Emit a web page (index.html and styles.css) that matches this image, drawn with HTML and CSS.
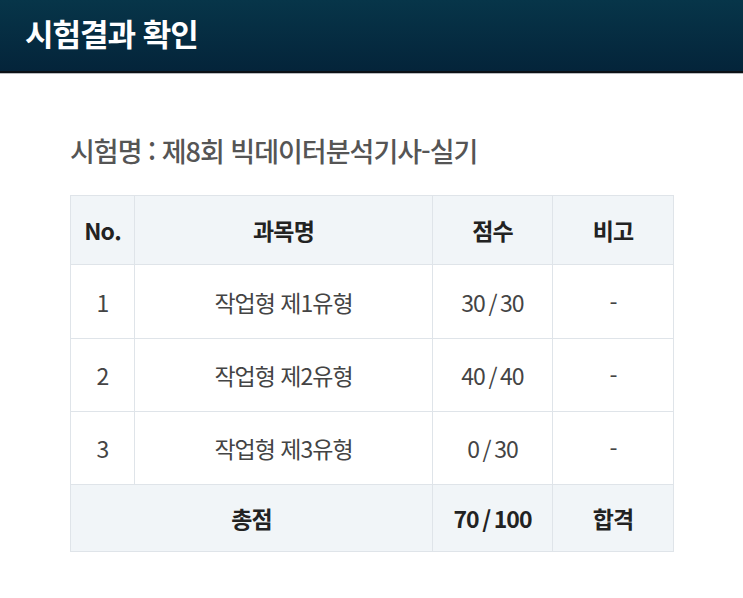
FILE: index.html
```html
<!DOCTYPE html>
<html lang="ko">
<head>
<meta charset="utf-8">
<link rel="stylesheet" href="styles.css">
</head>
<body>
<header class="top">
  <h1 class="title">시험결과 확인</h1>
</header>
<main class="content">
  <h2 class="exam">시험명 : 제8회 빅데이터분석기사-실기</h2>
  <table class="result">
    <colgroup>
      <col class="c-no"><col class="c-name"><col class="c-score"><col class="c-note">
    </colgroup>
    <thead>
      <tr><th>No.</th><th>과목명</th><th>점수</th><th>비고</th></tr>
    </thead>
    <tbody>
      <tr><td>1</td><td>작업형 제1유형</td><td>30&thinsp;/&thinsp;30</td><td>-</td></tr>
      <tr><td>2</td><td>작업형 제2유형</td><td>40&thinsp;/&thinsp;40</td><td>-</td></tr>
      <tr><td>3</td><td>작업형 제3유형</td><td>0&thinsp;/&thinsp;30</td><td>-</td></tr>
    </tbody>
    <tfoot>
      <tr><th colspan="2">총점</th><th>70&thinsp;/&thinsp;100</th><th>합격</th></tr>
    </tfoot>
  </table>
</main>
</body>
</html>
```
FILE: styles.css
```css
html, body {
  margin: 0;
  padding: 0;
  background: #ffffff;
  font-family: "Noto Sans CJK KR", "Noto Sans", sans-serif;
}
.top {
  height: 73px;
  background: linear-gradient(#073549, #04243a);
  border-bottom: 2px solid #0b1116;
  box-shadow: 0 1px 0 #b9bcbf;
  display: flex;
  align-items: center;
  padding-left: 25px;
  box-sizing: border-box;
}
.title {
  margin: 0;
  margin-top: -7px;
  color: #ffffff;
  font-size: 31px;
  font-weight: 700;
  letter-spacing: -1px;
}
.content {
  padding: 55px 70px 0 70px;
}
.exam {
  margin: 0 0 21px 0;
  font-size: 27px;
  font-weight: 500;
  color: #555555;
  letter-spacing: -1px;
  line-height: 46px;
}
.result {
  width: 603px;
  border-collapse: collapse;
  table-layout: fixed;
  border: 1px solid #dfe4e9;
}
.c-no { width: 64px; }
.c-name { width: 298px; }
.c-score { width: 120px; }
.c-note { width: 121px; }
.result th, .result td {
  border: 1px solid #dfe4e9;
  text-align: center;
  font-size: 23px;
  padding: 0;
}
.result thead th {
  height: 68px;
  background: #f1f5f8;
  color: #222222;
  font-weight: 700;
  letter-spacing: -0.8px;
}
.result tbody td {
  height: 72px;
  color: #444444;
  font-weight: 400;
  letter-spacing: -1px;
}
.result tbody tr:first-child td { height: 73px; }
.result tfoot th {
  height: 66px;
  background: #f1f5f8;
  color: #222222;
  font-weight: 700;
  letter-spacing: -1px;
}
```
